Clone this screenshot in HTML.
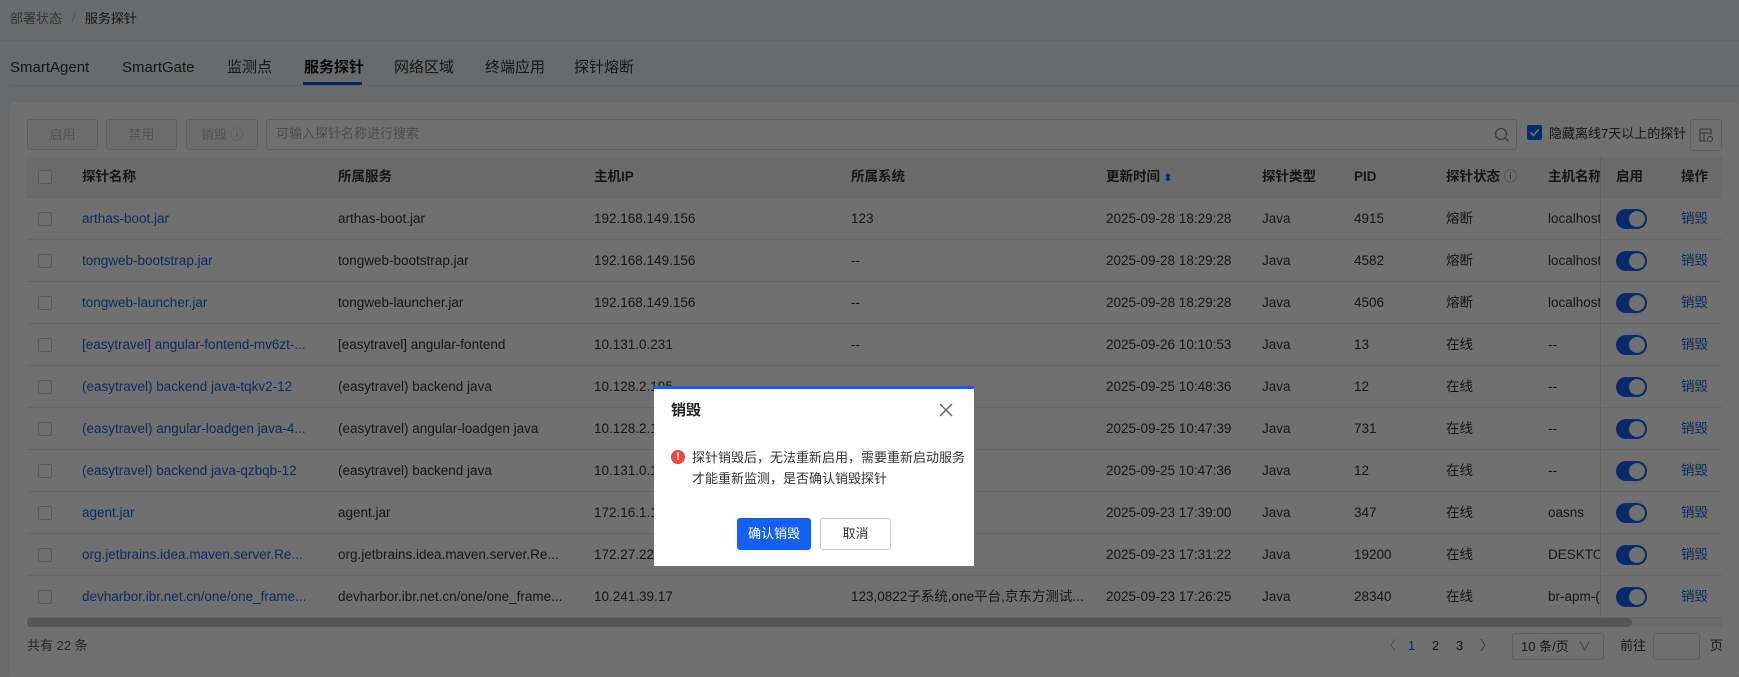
<!DOCTYPE html>
<html><head><meta charset="utf-8"><style>
*{box-sizing:border-box;margin:0;padding:0}
body{width:1739px;height:677px;overflow:hidden;background:#f0f2f5;font-family:"Liberation Sans","Noto Sans CJK SC",sans-serif;font-size:14px;color:#333;position:relative}
.a{position:absolute;white-space:nowrap;line-height:20px}
.hdr{left:0;top:0;width:1739px;height:41px;background:#f2f3f5;border-bottom:1px solid #e3e5e8}
.card{left:10px;top:102px;width:1729px;height:575px;background:#fff;border-radius:4px}
.btn{height:31px;border:1px solid #d9d9d9;border-radius:3px;color:#bbb;font-size:13px;text-align:center;line-height:29px;background:#f7f7f7}
.th{top:157px;height:41px;left:27px;width:1695px;background:#f3f4f6;border-bottom:1px solid #e6e6e6}
.t{font-size:13.5px;color:#333}
.b{font-weight:bold}
.lnk{color:#1f63d6}
.line{height:1px;background:#e8e8e8;left:27px;width:1695px}
.cb{width:14px;height:14px;border:1px solid #ccc;border-radius:2px;background:#fff}
.sw{width:31px;height:20px;border-radius:10px;background:#1460f2}
.sw:after{content:"";position:absolute;right:2px;top:2px;width:16px;height:16px;border-radius:8px;background:#fff}
.ov{left:0;top:0;width:1739px;height:677px;background:rgba(0,0,0,0.56)}
.tab{font-size:15px;top:57px;line-height:22px}
</style></head><body>
<div class="a hdr"></div>
<div class="a" style="left:10px;top:9px;font-size:13px;color:#777">部署状态 <span style="color:#bbb;margin:0 6px">/</span> <span style="color:#333">服务探针</span></div>
<div class="a" style="left:10px;top:85px;width:1729px;height:1px;background:#dcdfe3"></div>
<div class="a t tab" style="left:10px">SmartAgent</div>
<div class="a t tab" style="left:122px">SmartGate</div>
<div class="a t tab" style="left:227px">监测点</div>
<div class="a t b tab" style="left:304px;color:#111">服务探针</div>
<div class="a" style="left:303px;top:82px;width:59px;height:3px;background:#1557e0"></div>
<div class="a t tab" style="left:394px">网络区域</div>
<div class="a t tab" style="left:485px">终端应用</div>
<div class="a t tab" style="left:574px">探针熔断</div>
<div class="a card"></div>
<div class="a btn" style="left:27px;top:119px;width:71px">启用</div>
<div class="a btn" style="left:106px;top:119px;width:71px">禁用</div>
<div class="a btn" style="left:186px;top:119px;width:72px">销毁 ⓘ</div>
<div class="a" style="left:266px;top:119px;width:1251px;height:31px;border:1px solid #d9d9d9;border-radius:3px;background:#fff"></div>
<div class="a" style="left:276px;top:124px;font-size:13px;color:#aaa">可输入探针名称进行搜索</div>
<svg class="a" style="left:1494px;top:127px" width="16" height="16" viewBox="0 0 16 16"><circle cx="7" cy="7" r="5.5" fill="none" stroke="#888" stroke-width="1.3"/><path d="M11 11l3.5 3.5" stroke="#888" stroke-width="1.3"/></svg>
<div class="a" style="left:1527px;top:125px;width:15px;height:15px;background:#1460f2;border-radius:2px"></div>
<svg class="a" style="left:1527px;top:125px" width="15" height="15"><path d="M3.5 7.5l3 3 5-6" stroke="#fff" stroke-width="1.6" fill="none"/></svg>
<div class="a" style="left:1549px;top:124px;font-size:13px;color:#333">隐藏离线7天以上的探针</div>
<div class="a" style="left:1690px;top:119px;width:32px;height:32px;border:1px solid #d9d9d9;border-radius:3px;background:#fff"></div>
<svg class="a" style="left:1698px;top:127px" width="16" height="16"><path d="M2 2h11v6M2 2v12h6M2 6h11M6 6v8" stroke="#777" fill="none"/><circle cx="12" cy="12" r="2.5" stroke="#777" fill="none"/></svg>
<div class="a th"></div>
<div class="a cb" style="left:38px;top:170px"></div>
<div class="a t b" style="left:82px;top:167px">探针名称</div>
<div class="a t b" style="left:338px;top:167px">所属服务</div>
<div class="a t b" style="left:594px;top:167px">主机IP</div>
<div class="a t b" style="left:851px;top:167px">所属系统</div>
<div class="a t b" style="left:1106px;top:167px">更新时间 <span style="color:#1460f2;font-size:10px">⬍</span></div>
<div class="a t b" style="left:1262px;top:167px">探针类型</div>
<div class="a t b" style="left:1354px;top:167px">PID</div>
<div class="a t b" style="left:1446px;top:167px">探针状态 <span style="font-weight:normal;color:#888">ⓘ</span></div>
<div class="a t b" style="left:1548px;top:167px;width:52px;overflow:hidden">主机名称</div>
<div class="a t b" style="left:1616px;top:167px">启用</div>
<div class="a t b" style="left:1681px;top:167px">操作</div>
<div class="a" style="left:1600px;top:157px;width:1px;height:462px;background:#e0e0e0;box-shadow:-3px 0 6px rgba(0,0,0,0.08)"></div>

<div id="rows"></div>
<script>
var d=[["arthas-boot.jar","arthas-boot.jar","192.168.149.156","123","2025-09-28 18:29:28","4915","熔断","localhost"],
["tongweb-bootstrap.jar","tongweb-bootstrap.jar","192.168.149.156","--","2025-09-28 18:29:28","4582","熔断","localhost"],
["tongweb-launcher.jar","tongweb-launcher.jar","192.168.149.156","--","2025-09-28 18:29:28","4506","熔断","localhost"],
["[easytravel] angular-fontend-mv6zt-...","[easytravel] angular-fontend","10.131.0.231","--","2025-09-26 10:10:53","13","在线","--"],
["(easytravel) backend java-tqkv2-12","(easytravel) backend java","10.128.2.195","","2025-09-25 10:48:36","12","在线","--"],
["(easytravel) angular-loadgen java-4...","(easytravel) angular-loadgen java","10.128.2.1","","2025-09-25 10:47:39","731","在线","--"],
["(easytravel) backend java-qzbqb-12","(easytravel) backend java","10.131.0.1","","2025-09-25 10:47:36","12","在线","--"],
["agent.jar","agent.jar","172.16.1.1","","2025-09-23 17:39:00","347","在线","oasns"],
["org.jetbrains.idea.maven.server.Re...","org.jetbrains.idea.maven.server.Re...","172.27.22","","2025-09-23 17:31:22","19200","在线","DESKTO"],
["devharbor.ibr.net.cn/one/one_frame...","devharbor.ibr.net.cn/one/one_frame...","10.241.39.17","123,0822子系统,one平台,京东方测试...","2025-09-23 17:26:25","28340","在线","br-apm-("]];
var h="";
for(var i=0;i<10;i++){var y=198+i*42,r=d[i],ty=y+11;
h+='<div class="a line" style="top:'+(y+41)+'px"></div>';
h+='<div class="a cb" style="left:38px;top:'+(y+14)+'px"></div>';
h+='<div class="a t lnk" style="left:82px;top:'+ty+'px">'+r[0]+'</div>';
h+='<div class="a t" style="left:338px;top:'+ty+'px">'+r[1]+'</div>';
h+='<div class="a t" style="left:594px;top:'+ty+'px">'+r[2]+'</div>';
h+='<div class="a t" style="left:851px;top:'+ty+'px">'+r[3]+'</div>';
h+='<div class="a t" style="left:1106px;top:'+ty+'px">'+r[4]+'</div>';
h+='<div class="a t" style="left:1262px;top:'+ty+'px">Java</div>';
h+='<div class="a t" style="left:1354px;top:'+ty+'px">'+r[5]+'</div>';
h+='<div class="a t" style="left:1446px;top:'+ty+'px">'+r[6]+'</div>';
h+='<div class="a t" style="left:1548px;top:'+ty+'px;width:52px;overflow:hidden">'+r[7]+'</div>';
h+='<div class="a sw" style="left:1616px;top:'+(y+11)+'px"></div>';
h+='<div class="a t lnk" style="left:1681px;top:'+ty+'px">销毁</div>';}
document.getElementById("rows").innerHTML=h;
</script>
<div class="a" style="left:27px;top:618px;width:1695px;height:9px;background:#f3f3f3"></div>
<div class="a" style="left:27px;top:618px;width:1605px;height:9px;background:#c4c4c4;border-radius:4px"></div>
<div class="a" style="left:27px;top:636px;font-size:13px;color:#555">共有 22 条</div>
<div class="a" style="left:1383px;top:636px;font-size:13px;color:#bbb">〈</div>
<div class="a" style="left:1408px;top:636px;font-size:13px;color:#1460f2">1</div>
<div class="a" style="left:1432px;top:636px;font-size:13px">2</div>
<div class="a" style="left:1456px;top:636px;font-size:13px">3</div>
<div class="a" style="left:1480px;top:636px;font-size:13px;color:#777">〉</div>
<div class="a" style="left:1512px;top:633px;width:92px;height:27px;border:1px solid #d9d9d9;border-radius:3px;background:#fff;font-size:13px;line-height:25px;padding-left:8px">10 条/页 <span style="color:#888;margin-left:6px">∨</span></div>
<div class="a" style="left:1620px;top:636px;font-size:13px">前往</div>
<div class="a" style="left:1653px;top:633px;width:47px;height:27px;border:1px solid #d9d9d9;border-radius:3px;background:#fff"></div>
<div class="a" style="left:1710px;top:636px;font-size:13px">页</div>

<div class="a ov"></div>
<div class="a" style="left:654px;top:386px;width:320px;height:180px;background:#fff;border-top:3px solid #1460f2"></div>
<div class="a b" style="left:671px;top:401px;font-size:15px;color:#222">销毁</div>
<svg class="a" style="left:939px;top:403px" width="14" height="14"><path d="M1 1l12 12M13 1L1 13" stroke="#666" stroke-width="1.4"/></svg>
<div class="a" style="left:671px;top:450px;width:14px;height:14px;border-radius:7px;background:#f0443f;color:#fff;font-size:11px;font-weight:bold;text-align:center;line-height:14px">!</div>
<div class="a" style="left:692px;top:447px;font-size:13px;color:#333;line-height:21px">探针销毁后，无法重新启用，需要重新启动服务<br>才能重新监测，是否确认销毁探针</div>
<div class="a" style="left:737px;top:518px;width:74px;height:32px;background:#1460f2;border-radius:3px;color:#fff;font-size:13px;text-align:center;line-height:32px">确认销毁</div>
<div class="a" style="left:820px;top:518px;width:71px;height:32px;border:1px solid #ccc;border-radius:3px;color:#333;font-size:13px;text-align:center;line-height:30px">取消</div>
</body></html>
